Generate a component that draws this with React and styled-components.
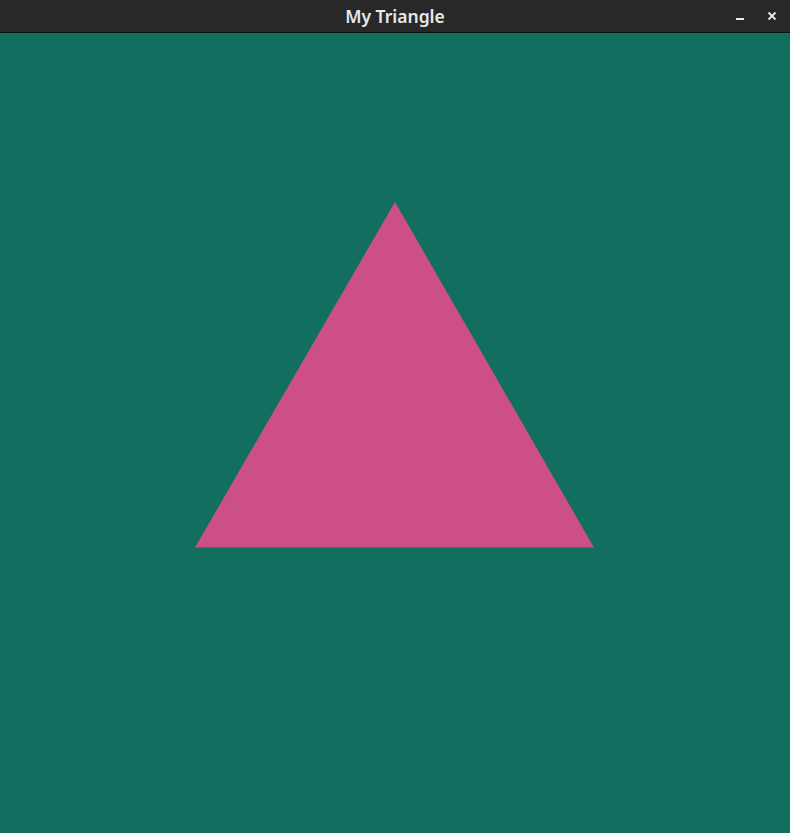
import React from 'react';
import styled, { createGlobalStyle } from 'styled-components';

const GlobalStyle = createGlobalStyle`
	html, body {
		margin: 0;
		padding: 0;
		background: #126f5f;
		overflow: hidden;
	}
`;

const Window = styled.div`
	width: 790px;
	height: 833px;
	display: flex;
	flex-direction: column;
	font-family: 'Noto Sans', 'Open Sans', sans-serif;
`;

const TitleBar = styled.div`
	height: 32px;
	flex: none;
	display: grid;
	grid-template-columns: 1fr auto 1fr;
	align-items: center;
	background: #282828;
	border-bottom: 1px solid #0d0d0d;
`;

const Title = styled.div`
	grid-column: 2;
	color: #e8e8e8;
	font-size: 17.5px;
	font-weight: 600;
	line-height: 1;
	padding-top: 1px;
`;

const Controls = styled.div`
	grid-column: 3;
	justify-self: end;
	display: flex;
	align-items: center;
	gap: 12px;
	padding-right: 8px;
`;

const ControlButton = styled.button`
	width: 20px;
	height: 20px;
	padding: 0;
	border: none;
	background: transparent;
	display: flex;
	align-items: center;
	justify-content: center;
	cursor: pointer;
`;

const Canvas = styled.div`
	flex: 1;
	background: #126f5f;
	svg {
		display: block;
		width: 100%;
		height: 100%;
	}
`;

const App = () => {
	return (
		<>
			<GlobalStyle />
			<Window>
				<TitleBar>
					<Title>My Triangle</Title>
					<Controls>
						<ControlButton aria-label='Minimize'>
							<svg width='10' height='10' viewBox='0 0 10 10'>
								<rect x='1' y='7' width='8' height='2' fill='#e8e8e8' />
							</svg>
						</ControlButton>
						<ControlButton aria-label='Close'>
							<svg width='10' height='10' viewBox='0 0 10 10'>
								<path d='M1.5 1.5 L8.5 8.5 M8.5 1.5 L1.5 8.5' stroke='#e8e8e8' strokeWidth='1.8' />
							</svg>
						</ControlButton>
					</Controls>
				</TitleBar>
				<Canvas>
					<svg viewBox='0 0 790 800'>
						<polygon points='395,169 195,514.5 594,514.5' fill='#cc4f87' />
					</svg>
				</Canvas>
			</Window>
		</>
	);
};

export default App;
